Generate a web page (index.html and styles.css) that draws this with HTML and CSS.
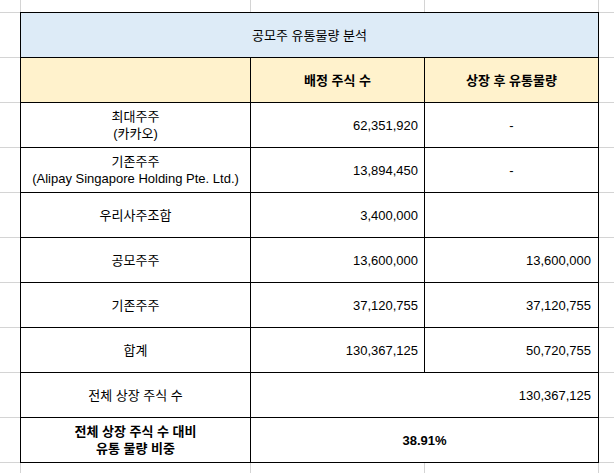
FILE: index.html
```html
<!DOCTYPE html>
<html lang="ko">
<head>
<meta charset="utf-8">
<title>공모주 유통물량 분석</title>
<link rel="stylesheet" href="styles.css">
</head>
<body>
<div class="sheet">
  <div class="report">
    <div class="cell title span3">공모주 유통물량 분석</div>
    <div class="cell head"></div>
    <div class="cell head bold">배정 주식 수</div>
    <div class="cell head bold">상장 후 유통물량</div>

    <div class="cell label">최대주주<br>(카카오)</div>
    <div class="cell num">62,351,920</div>
    <div class="cell center">-</div>

    <div class="cell label">기존주주<br>(Alipay Singapore Holding Pte. Ltd.)</div>
    <div class="cell num">13,894,450</div>
    <div class="cell center">-</div>

    <div class="cell label">우리사주조합</div>
    <div class="cell num">3,400,000</div>
    <div class="cell"></div>

    <div class="cell label">공모주주</div>
    <div class="cell num">13,600,000</div>
    <div class="cell num wide">13,600,000</div>

    <div class="cell label">기존주주</div>
    <div class="cell num">37,120,755</div>
    <div class="cell num wide">37,120,755</div>

    <div class="cell label">합계</div>
    <div class="cell num">130,367,125</div>
    <div class="cell num wide">50,720,755</div>

    <div class="cell label">전체 상장 주식 수</div>
    <div class="cell num wide span2">130,367,125</div>

    <div class="cell label bold">전체 상장 주식 수 대비<br>유통 물량 비중</div>
    <div class="cell center bold span2">38.91%</div>
  </div>

  <div class="c"></div><div class="c"></div><div class="c"></div><div class="c"></div><div class="c"></div>
  <div class="c"></div><div class="c"></div>
  <div class="c"></div><div class="c"></div>
  <div class="c"></div><div class="c"></div>
  <div class="c"></div><div class="c"></div>
  <div class="c"></div><div class="c"></div>
  <div class="c"></div><div class="c"></div>
  <div class="c"></div><div class="c"></div>
  <div class="c"></div><div class="c"></div>
  <div class="c"></div><div class="c"></div>
  <div class="c"></div><div class="c"></div>
  <div class="c"></div><div class="c"></div><div class="c"></div><div class="c"></div><div class="c"></div>
</div>
</body>
</html>
```

FILE: styles.css
```css
html, body {
  margin: 0;
  padding: 0;
  background: #ffffff;
}

body {
  font-family: "Liberation Sans", "Noto Sans CJK KR", sans-serif;
  font-size: 13px;
  color: #000000;
}

.sheet {
  display: grid;
  grid-template-columns: 20px 229px 173px 173px 1fr;
  grid-template-rows: 12px repeat(10, 44px) 1fr;
  gap: 1px;
  background: #d4d4d4;
  width: 614px;
  height: 473px;
  overflow: hidden;
}

.sheet > .c {
  background: #ffffff;
}

.report {
  grid-column: 2 / 5;
  grid-row: 2 / 12;
  margin: -1px;
  display: grid;
  grid-template-columns: 229px 173px 173px;
  grid-template-rows: repeat(10, 44px);
  gap: 1px;
  border: 1px solid #000000;
  background: #000000;
}

.cell {
  background: #ffffff;
  display: flex;
  align-items: center;
  justify-content: center;
  text-align: center;
  line-height: 17px;
  white-space: nowrap;
}

.title {
  background: #ddebf7;
}

.head {
  background: #fff2cc;
}

.span3 {
  grid-column: span 3;
}

.span2 {
  grid-column: span 2;
}

.bold {
  font-weight: bold;
}

.num {
  justify-content: flex-end;
  padding-right: 6px;
}

.num.wide {
  padding-right: 7px;
}
```
